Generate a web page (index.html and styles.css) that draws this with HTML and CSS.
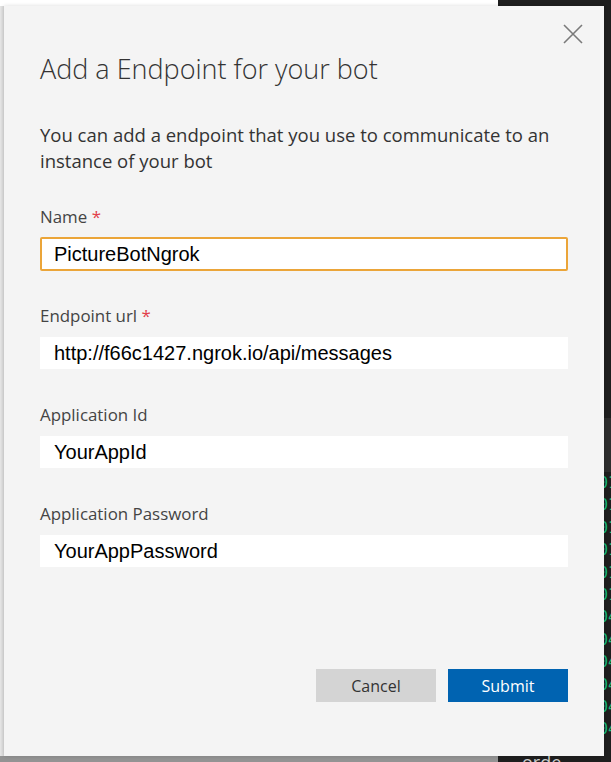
FILE: index.html
```html
<!DOCTYPE html>
<html>
<head>
<meta charset="utf-8">
<link rel="stylesheet" href="styles.css">
</head>
<body>
<div class="backdrop">
  <div class="bg-left">
    <div class="bg-left-top"></div>
    <div class="bg-left-mid"></div>
    <div class="bg-left-bottom"></div>
  </div>
  <div class="bg-right">
    <div class="term-gap"></div>
    <div class="term-header"></div>
    <div class="term-lines">
      <div class="term-line">01</div>
      <div class="term-line">01</div>
      <div class="term-line">01</div>
      <div class="term-line">01</div>
      <div class="term-line">01</div>
      <div class="term-line">01</div>
      <div class="term-line">04</div>
      <div class="term-line">04</div>
      <div class="term-line">04</div>
      <div class="term-line">04</div>
      <div class="term-line">04</div>
      <div class="term-line">04</div>
    </div>
    <div class="term-footer">orde</div>
  </div>
</div>

<div class="dialog">
  <button class="close" aria-label="Close">
    <svg width="20" height="20" viewBox="0 0 20 20"><path d="M1 1 L19 19 M19 1 L1 19" stroke="#7a7a7a" stroke-width="1.6" fill="none"/></svg>
  </button>
  <h1 class="title">Add a Endpoint for your bot</h1>
  <p class="desc">You can add a endpoint that you use to communicate to an instance of your bot</p>

  <div class="fields">
    <div class="field">
      <label class="label">Name <span class="req">*</span></label>
      <div class="input focused">PictureBotNgrok</div>
    </div>
    <div class="field">
      <label class="label">Endpoint url <span class="req">*</span></label>
      <div class="input">http://f66c1427.ngrok.io/api/messages</div>
    </div>
    <div class="field">
      <label class="label">Application Id</label>
      <div class="input">YourAppId</div>
    </div>
    <div class="field">
      <label class="label">Application Password</label>
      <div class="input">YourAppPassword</div>
    </div>
  </div>

  <div class="actions">
    <button class="btn btn-cancel">Cancel</button>
    <button class="btn btn-submit">Submit</button>
  </div>
</div>
</body>
</html>
```
FILE: styles.css
```css
html, body {
  margin: 0;
  padding: 0;
  width: 611px;
  height: 762px;
  overflow: hidden;
}
body {
  position: relative;
  font-family: "Open Sans", "Noto Sans", sans-serif;
}
.backdrop {
  display: flex;
  width: 611px;
  height: 762px;
}
.bg-left {
  width: 498px;
  display: flex;
  flex-direction: column;
  background: #ffffff;
}
.bg-left-top { height: 6px; background: #ffffff; }
.bg-left-mid {
  flex: 1;
  background: linear-gradient(to right, #e6e6e6 0, #d6d6d6 4px, #f4f4f4 5px);
}
.bg-left-bottom {
  height: 6px;
  background: #939393;
}
.bg-right {
  flex: 1;
  background: #1e1e1e;
  display: flex;
  flex-direction: column;
  align-items: flex-end;
}
.term-gap { height: 418px; }
.term-header {
  height: 54px;
  width: 7px;
  background: #2d2d2d;
}
.term-lines {
  width: 7px;
  overflow: hidden;
  flex: 1;
}
.term-line {
  font-family: "DejaVu Sans Mono", monospace;
  font-size: 15px;
  line-height: 22.4px;
  color: #16b97a;
  white-space: nowrap;
  margin-left: -5px;
}
.term-footer {
  align-self: flex-start;
  margin-left: 24px;
  margin-top: -4px;
  font-size: 18px;
  line-height: 20px;
  color: #cccccc;
  height: 10px;
}
.dialog {
  position: absolute;
  left: 4px;
  top: 6px;
  width: 600px;
  height: 750px;
  box-sizing: border-box;
  background: #f4f4f4;
  padding: 0 36px 0 36px;
  display: flex;
  flex-direction: column;
  box-shadow: 0 0 4px rgba(0,0,0,0.15);
}
.close {
  position: absolute;
  right: 21px;
  top: 18px;
  width: 20px;
  height: 20px;
  padding: 0;
  border: 0;
  background: transparent;
  line-height: 0;
}
.title {
  margin: 45px 0 0 0;
  font-weight: 300;
  font-size: 27px;
  line-height: 36px;
  color: #333333;
}
.desc {
  margin: 35px 0 0 0;
  font-size: 18.5px;
  line-height: 26px;
  color: #333333;
}
.fields {
  margin-top: 32px;
  display: flex;
  flex-direction: column;
  gap: 35px;
}
.field {
  display: flex;
  flex-direction: column;
  gap: 10px;
}
.label {
  font-size: 16.9px;
  line-height: 22px;
  color: #444444;
}
.req { color: #e23e4a; }
.input {
  height: 32px;
  box-sizing: border-box;
  background: #ffffff;
  border: 1px solid #ffffff;
  padding: 0 13px;
  font-family: "Liberation Sans", Arial, sans-serif;
  font-size: 20px;
  line-height: 30px;
  color: #000000;
}
.input.focused {
  height: 34px;
  margin: -1px 0;
  border: 2px solid #eba539;
  border-radius: 2px;
  padding: 0 12px;
}
.actions {
  margin-top: auto;
  margin-bottom: 54px;
  display: flex;
  justify-content: flex-end;
  gap: 12px;
}
.btn {
  width: 120px;
  height: 33px;
  border: 0;
  padding: 0;
  font-family: "Open Sans", "Noto Sans", sans-serif;
  font-size: 16px;
}
.btn-cancel { background: #d4d4d4; color: #333333; }
.btn-submit { background: #0063b1; color: #ffffff; }
```
